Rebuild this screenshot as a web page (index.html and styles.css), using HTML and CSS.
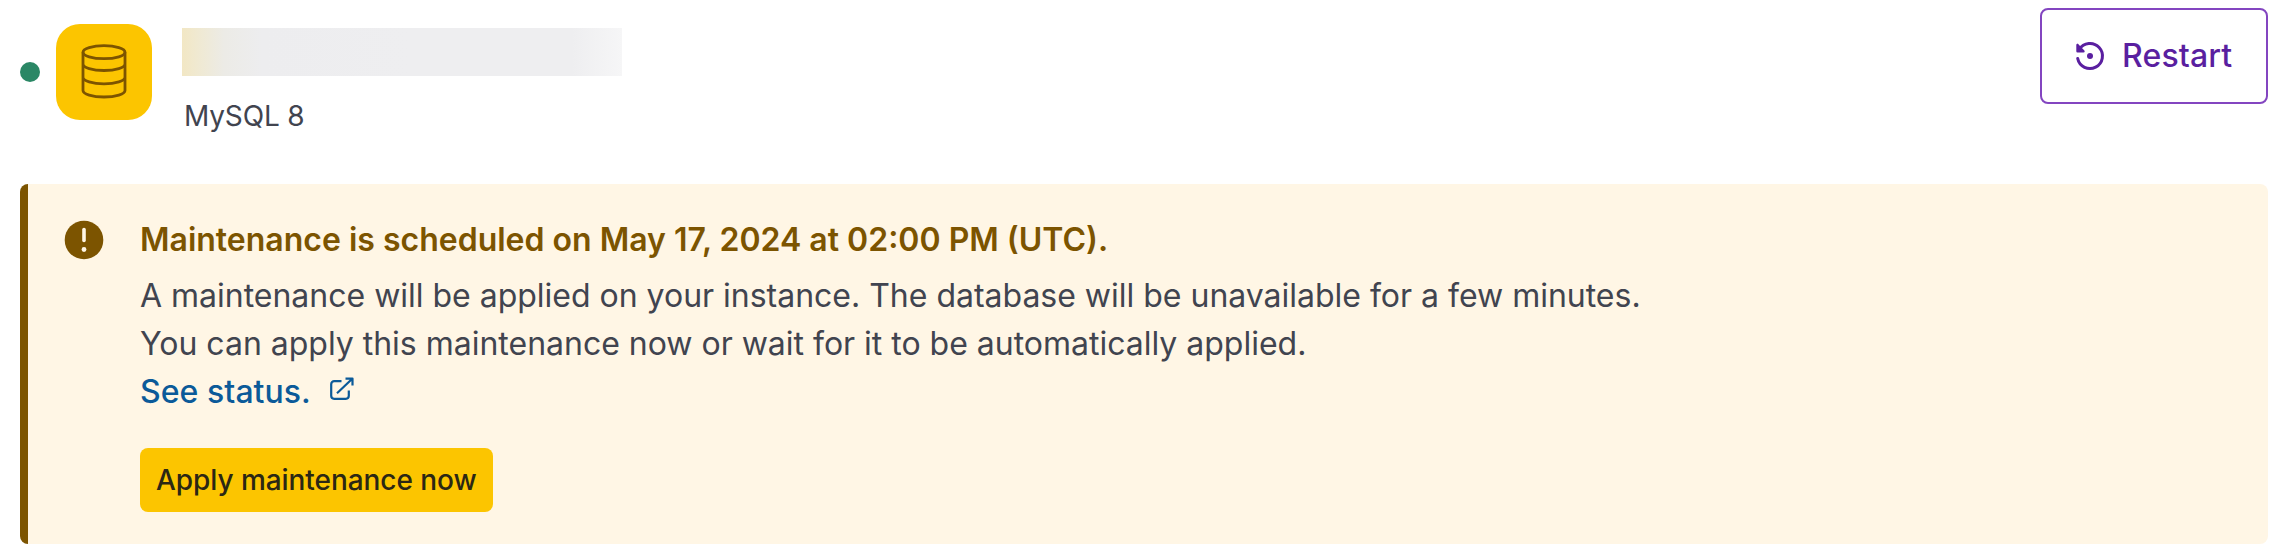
FILE: index.html
```html
<!DOCTYPE html>
<html lang="en">
<head>
<meta charset="utf-8">
<title>MySQL 8</title>
<link rel="stylesheet" href="styles.css">
</head>
<body>
<header class="header">
  <span class="status-dot"></span>
  <div class="tile">
    <svg class="tile-icon" viewBox="0 0 48 56" fill="none" stroke="#7c5400" stroke-width="2.8">
      <ellipse cx="24" cy="8.2" rx="21" ry="6.5"/>
      <path d="M3 8.2V46.500c0 3.600 9.400 6.500 21 6.500s21-2.900 21-6.500V8.200M3 20c0 3.600 9.400 6.500 21 6.500s21-2.900 21-6.500M3 33.300c0 3.600 9.400 6.500 21 6.500s21-2.900 21-6.500"/>
    </svg>
  </div>
  <div class="info">
    <div class="name"></div>
    <div class="engine">MySQL 8</div>
  </div>
  <button class="restart">
    <svg class="restart-icon" viewBox="0 0 32 32" fill="none" stroke="#5a1fa0" stroke-width="3" stroke-linecap="round" stroke-linejoin="round">
      <path d="M3.700 18.500A12.500 12.500 0 1 0 5.300 9.500"/>
      <path d="M3.500 5V11.300H9.500L3.500 5" fill="#5a1fa0" stroke-width="2.400"/>
      <circle cx="16" cy="16" r="3" fill="#5a1fa0" stroke="none"/>
    </svg>
    <span>Restart</span>
  </button>
</header>
<section class="alert">
  <svg class="alert-icon" viewBox="0 0 40 40">
    <circle cx="20" cy="20" r="19.300" fill="#7c5400"/>
    <path d="M20 9.500V20.500" stroke="#fff6e5" stroke-width="3.600" stroke-linecap="round"/>
    <circle cx="20" cy="29.500" r="2.400" fill="#fff6e5"/>
  </svg>
  <div class="alert-body">
    <h2 class="alert-title">Maintenance is scheduled on May 17, 2024 at 02:00 PM (UTC).</h2>
    <p class="alert-text">A maintenance will be applied on your instance. The database will be unavailable for a few minutes.<br>You can apply this maintenance now or wait for it to be automatically applied.</p>
    <a class="link">See status.
      <svg class="link-icon" viewBox="0 0 24 24" fill="none" stroke="#0b5a99" stroke-width="2.200" stroke-linejoin="round">
        <path d="M11.500 4.200H4.200a3 3 0 0 0-3 3V18.800a3 3 0 0 0 3 3H15.800a3 3 0 0 0 3-3V13.500M7 16.200L22 2M15.500 1.600H22.500V8.500"/>
      </svg>
    </a>
    <button class="apply">Apply maintenance now</button>
  </div>
</section>
</body>
</html>
```
FILE: styles.css
```css
* { box-sizing: border-box; }
body {
  margin: 0;
  padding: 8px 14px 16px 20px;
  background: #fff;
  color: #41444f;
  font-family: Inter, "Liberation Sans", sans-serif;
}
.header { display: flex; align-items: flex-start; height: 176px; }
.status-dot {
  width: 20px;
  height: 20px;
  margin: 54px 16px 0 0;
  border-radius: 50%;
  background: #2a8765;
}
.tile {
  display: flex;
  align-items: center;
  justify-content: center;
  width: 96px;
  height: 96px;
  margin: 16px 30px 0 0;
  border-radius: 24px;
  background: #fcc500;
}
.tile-icon { width: 48px; height: 56px; }
.info { flex: 1; padding-top: 20px; }
.name {
  width: 440px;
  height: 48px;
  background: linear-gradient(90deg, #f2e7c4 0, #f0e9d0 14px, #ecebe6 42px, #ededef 80px, #eeeef0 230px, #eeeef0 390px, #f6f6f7 440px);
}
.engine { padding: 20px 0 0 2px; font-size: 28px; line-height: 40px; letter-spacing: -0.15px; }
.restart {
  display: flex;
  align-items: center;
  gap: 16px;
  height: 96px;
  width: 228px;
  padding: 0 0 0 32px;
  border: 2px solid #8345c0;
  border-radius: 8px;
  background: #fff;
  color: #5a1fa0;
  font: 500 32px/48px Inter, sans-serif;
  letter-spacing: 0.15px;
}
.restart-icon { width: 32px; height: 32px; }
.alert {
  display: flex;
  gap: 36px;
  height: 360px;
  padding: 32px 32px 32px 36px;
  border-left: 8px solid #7c5400;
  border-radius: 8px;
  background: #fff6e5;
}
.alert-icon { width: 40px; height: 40px; margin-top: 4px; }
.alert-title { margin: 0 0 8px; color: #7c5400; font-size: 32px; line-height: 48px; font-weight: 600; }
.alert-text { margin: 0; font-size: 32px; line-height: 48px; letter-spacing: -0.01px; }
.link { display: flex; gap: 19px; color: #0b5a99; font-size: 32px; line-height: 48px; font-weight: 500; letter-spacing: 0.05px; }
.link-icon { width: 24px; height: 24px; margin-top: 9px; }
.apply {
  height: 64px;
  margin-top: 32px;
  padding: 0 16px;
  border: 0;
  border-radius: 8px;
  background: #fcc500;
  color: #2b2714;
  font: 500 28px/40px Inter, sans-serif;
  letter-spacing: -0.06px;
}
```
